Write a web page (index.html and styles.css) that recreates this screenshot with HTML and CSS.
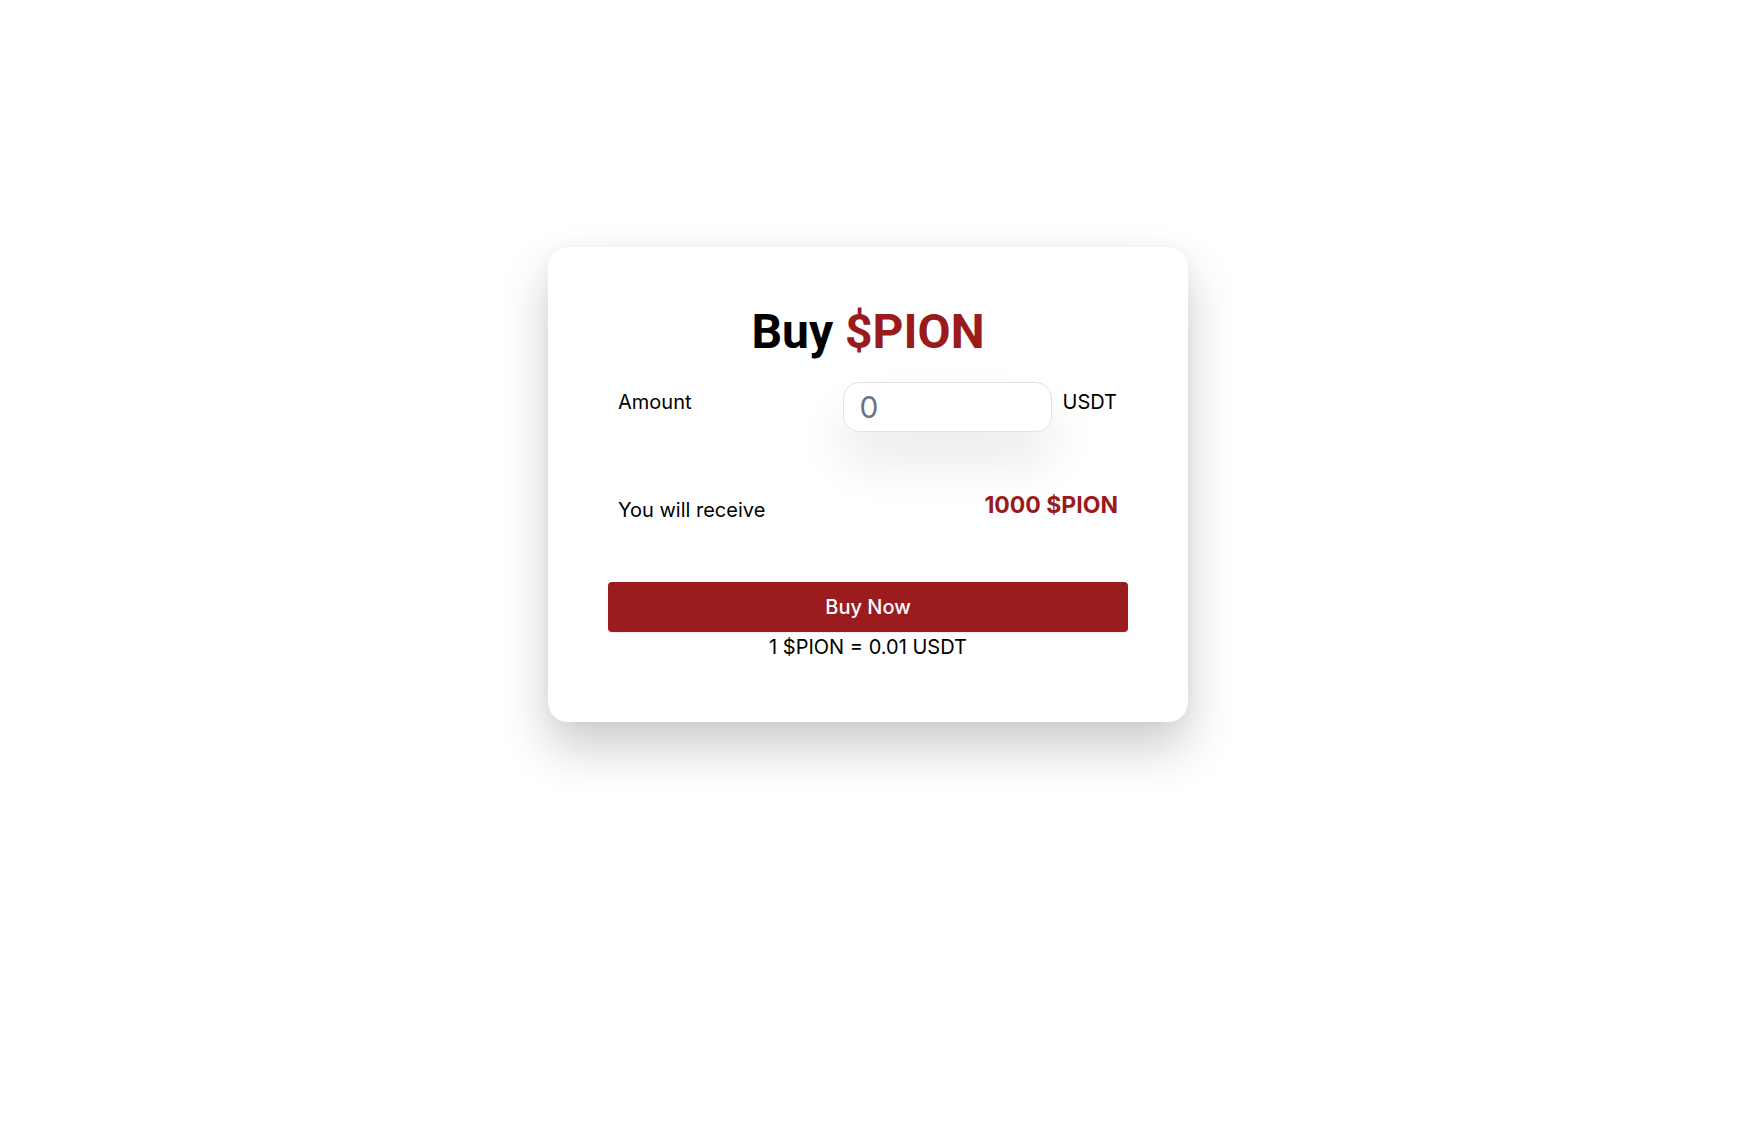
FILE: index.html
```html
<!DOCTYPE html>
<html lang="en">
<head>
<meta charset="utf-8">
<title>Buy $PION</title>
<link rel="stylesheet" href="styles.css">
</head>
<body>
<main class="page">
  <section class="card">
    <h1 class="title">Buy <span class="accent">$PION</span></h1>
    <div class="row row-amount">
      <label class="label label-amount" for="amount">Amount</label>
      <div class="amount-group">
        <input id="amount" class="amount-input" type="text" placeholder="0">
        <span class="unit">USDT</span>
      </div>
    </div>
    <div class="row row-receive">
      <span class="label label-receive">You will receive</span>
      <span class="receive-value">1000 $PION</span>
    </div>
    <button class="buy-btn" type="button">Buy Now</button>
    <p class="rate">1 $PION = 0.01 USDT</p>
  </section>
</main>
</body>
</html>
```

FILE: styles.css
```css
* { box-sizing: border-box; }

html, body {
  margin: 0;
  padding: 0;
  background: #ffffff;
}

body {
  font-family: "Inter", "Liberation Sans", sans-serif;
  color: #000;
}

.page {
  display: flex;
  justify-content: center;
  padding: 247px 11px 0 0;
  min-height: 1147px;
}

.card {
  width: 640px;
  height: 475px;
  background: #fff;
  border-radius: 20px;
  box-shadow: 0 26px 50px rgba(0, 0, 0, 0.2), 0 0 14px rgba(0, 0, 0, 0.04);
  padding: 57px 60px 0 60px;
  display: flex;
  flex-direction: column;
}

.title {
  margin: 0;
  font-family: "Roboto", "Liberation Sans", sans-serif;
  font-weight: 700;
  font-size: 48px;
  line-height: 56px;
  text-align: center;
  color: #000;
}

.accent { color: #991b1b; }

.row {
  display: flex;
  justify-content: space-between;
  align-items: flex-start;
  padding: 0 10px;
}

.row-amount { margin-top: 22px; }

.label {
  font-size: 20px;
  line-height: 24px;
  color: #000;
}

.label-amount { padding-top: 8px; }

.amount-group {
  display: flex;
  align-items: flex-start;
  gap: 11px;
  margin-right: 1px;
}

.amount-input {
  width: 209px;
  height: 50px;
  border: 1px solid #e2e2e2;
  border-radius: 16px;
  padding: 0 16px;
  font-family: "Inter", "Liberation Sans", sans-serif;
  font-size: 30px;
  color: #333;
  background: #fff;
  box-shadow: 0 30px 50px rgba(0, 0, 0, 0.09);
  outline: none;
}

.amount-input::placeholder { color: #6b7280; }

.unit {
  font-size: 20px;
  line-height: 24px;
  padding-top: 8px;
}

.row-receive { margin-top: 59px; }

.label-receive { padding-top: 7px; }

.receive-value {
  font-size: 23px;
  line-height: 28px;
  font-weight: 700;
  color: #991b1b;
}

.buy-btn {
  margin-top: 60px;
  height: 50px;
  width: 100%;
  border: none;
  border-radius: 4px;
  background: #9b1c1f;
  color: #fff;
  font-family: "Inter", "Liberation Sans", sans-serif;
  font-size: 20px;
  font-weight: 500;
  box-shadow: 0 1px 2px rgba(0, 0, 0, 0.1);
  cursor: pointer;
}

.rate {
  margin: 3px 0 0;
  text-align: center;
  font-size: 20px;
  line-height: 24px;
}
```
